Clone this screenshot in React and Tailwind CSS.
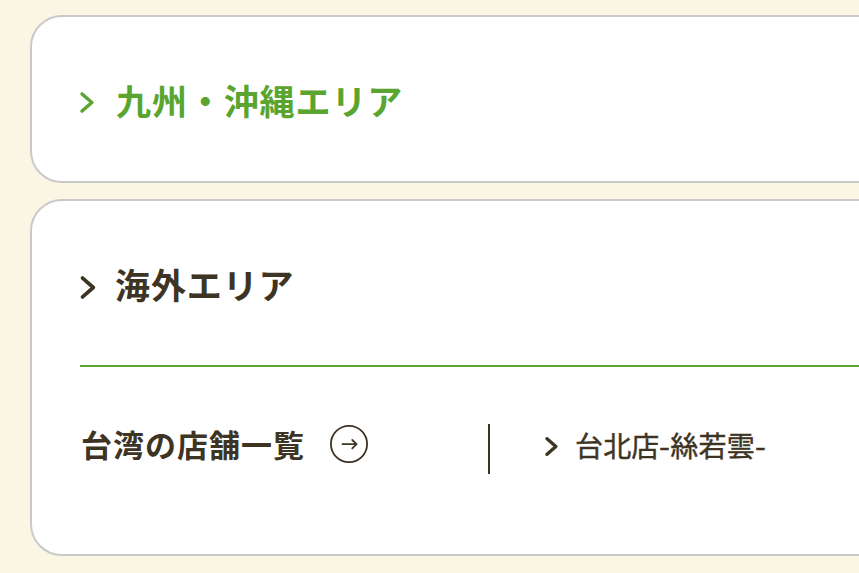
const Chevron = ({ className, weight = 3.2 }) => (
  <svg viewBox="0 0 13 20" className={className} fill="none" stroke="currentColor" strokeWidth={weight} strokeLinecap="round" strokeLinejoin="round">
    <path d="M1.8 1.8 11.1 10 1.8 18.2" />
  </svg>
);

export default function App() {
  return (
    <div className="h-[573px] w-[859px] overflow-hidden bg-[#fbf6e3] pt-[15px] pl-[30px] font-['Noto_Sans_CJK_JP',sans-serif] text-[#3e3424]">
      <section className="flex h-[168px] w-[900px] rounded-[32px] border-2 border-[#c9c9c9] bg-white pt-[58px] pl-12 text-[#59a52f]">
        <h2 className="flex h-[52px] items-center text-[35px] leading-[52px] font-bold tracking-[0.9px]">
          <Chevron className="mt-[3px] mr-[22px] h-[21px] w-[14px]" />
          <span className="-mt-[2px] whitespace-nowrap">九州・沖縄エリア</span>
        </h2>
      </section>
      <section className="mt-4 h-[357px] w-[900px] rounded-[32px] border-2 border-[#c9c9c9] bg-white pt-[58px] pl-12">
        <h2 className="flex h-[52px] items-center text-[35px] leading-[52px] font-bold tracking-[0.9px]">
          <Chevron className="mt-[4px] mr-[19px] h-[23px] w-[16px]" />
          <span className="-mt-[2px] whitespace-nowrap">海外エリア</span>
        </h2>
        <div className="mt-[54px] h-[2px] bg-[#59a52f]" />
        <div className="mt-[57px] flex h-[50px] items-start">
          <span className="-mt-[3px] w-[250px] pl-px text-[31px] leading-[46px] font-bold tracking-[1px] whitespace-nowrap">台湾の店舗一覧</span>
          <svg className="mt-px size-[38px]" viewBox="0 0 38 38" fill="none" stroke="currentColor" strokeWidth="1.8" strokeLinecap="round" strokeLinejoin="round">
            <circle cx="19" cy="19" r="18.1" />
            <path d="M12.5 19.2h14M22.3 15l4.3 4.2-4.3 4.2" />
          </svg>
          <div className="ml-[120px] h-[50px] w-[2px] bg-[#3e3424]" />
          <Chevron className="mt-[13px] ml-[55px] h-[19px] w-[13px]" weight={3.5} />
          <span className="mt-px ml-[17px] text-[28px] leading-[40px] font-normal tracking-[0.15px] whitespace-nowrap [-webkit-text-stroke:0.4px_#3e3424]">台北店<span className="inline-block origin-left scale-x-[1.12] pr-px">-</span>絲若雲<span className="inline-block origin-left scale-x-[1.12]">-</span></span>
        </div>
      </section>
    </div>
  );
}
